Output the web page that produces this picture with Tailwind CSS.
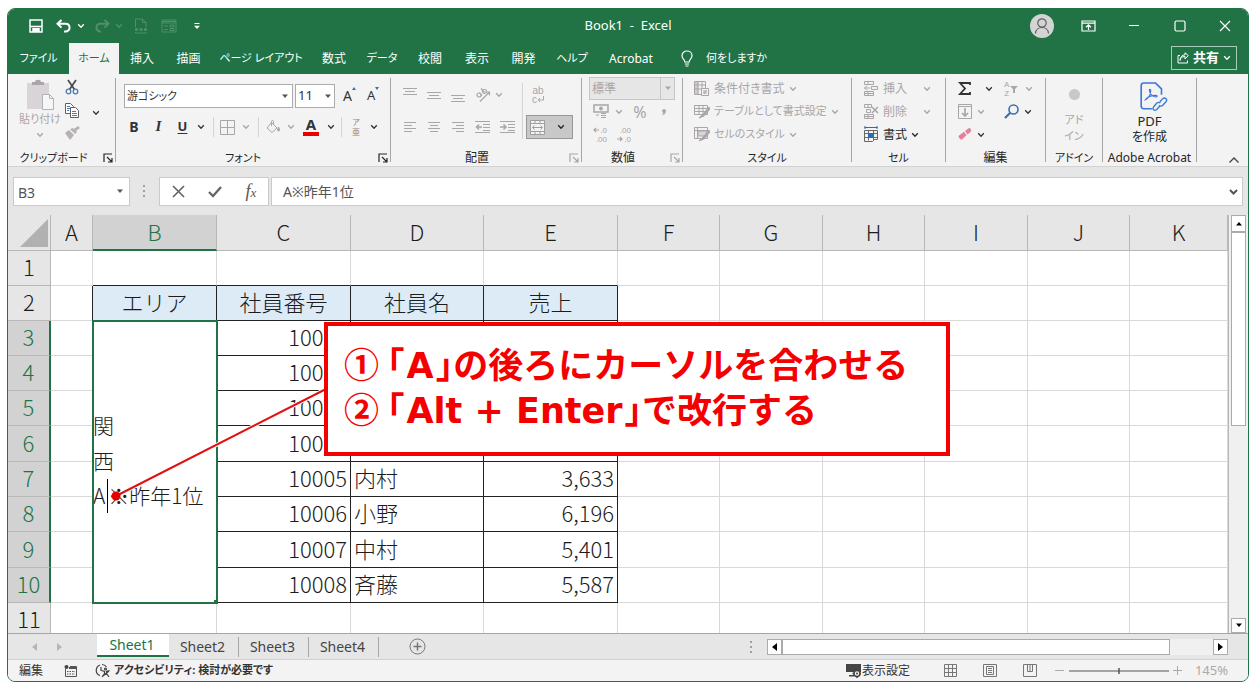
<!DOCTYPE html>
<html lang="ja">
<head>
<meta charset="utf-8">
<title>Book1 - Excel</title>
<script src="https://cdn.jsdelivr.net/npm/@tailwindcss/browser@4"></script>
</head>
<body class="bg-white">
<svg class="hidden" aria-hidden="true">
  <symbol id="chev" viewBox="0 0 8 6"><path d="M1.2 1.3 4 4.2 6.8 1.3" fill="none" stroke="currentColor" stroke-width="1.3"/></symbol>
  <symbol id="launch" viewBox="0 0 10 10"><path d="M1 9V1h8M4 4l5 5M9 5v4H5" fill="none" stroke="currentColor" stroke-width="1.2"/></symbol>
  <symbol id="tri" viewBox="0 0 8 5"><path d="M1 .5h6L4 4z" fill="currentColor"/></symbol>
</svg>
<div class="flex h-screen flex-col bg-white px-[7px] py-2 font-['Noto_Sans','Noto_Sans_CJK_JP',sans-serif] text-xs text-[#262626] [font-feature-settings:'palt']">
<div class="flex min-h-0 flex-1 flex-col overflow-hidden rounded-lg border border-[#217346] bg-[#e6e6e6]">

  <!-- Title bar -->
  <header class="grid h-[34px] shrink-0 grid-cols-[1fr_auto_1fr] items-center bg-[#217346] text-white">
    <div class="flex items-center pl-[21px]">
      <button aria-label="上書き保存" class="w-[14px]"><svg class="size-[14px]" viewBox="0 0 14 14" fill="none" stroke="currentColor" stroke-width="1.5"><path d="M1 1h12v12H1z"/><path d="M1 7.5h12"/><path d="M4 13V9.800h6V13" fill="currentColor"/></svg></button>
      <button aria-label="元に戻す" class="ml-[13px] w-4"><svg class="h-[14px] w-4" viewBox="0 0 16 14" fill="none" stroke="currentColor" stroke-width="2"><path d="M5.500 1 1.500 4.800l4 3.800M2 4.800h7.500c5.300 0 5.500 7.700 0 7.700H8"/></svg></button>
      <button aria-label="元に戻す一覧" class="ml-[3px] w-3"><svg class="mx-auto h-[6px] w-2"><use href="#chev"/></svg></button>
      <button aria-label="やり直し" class="ml-[7px] w-4 text-[#4d9069]"><svg class="h-[14px] w-4" viewBox="0 0 16 14" fill="none" stroke="currentColor" stroke-width="2"><path d="m10.500 1 4 3.800-4 3.800M14 4.800H6.500c-5.300 0-5.500 7.700 0 7.700H7"/></svg></button>
      <button aria-label="やり直し一覧" class="ml-[3px] w-3 text-[#4d9069]"><svg class="mx-auto h-[6px] w-2"><use href="#chev"/></svg></button>
      <button aria-label="ファイル" class="ml-[9px] w-[14px] text-[#4d9069]"><svg class="h-4 w-[14px]" viewBox="0 0 14 16" fill="none" stroke="currentColor"><path d="M1.500 9V1h7l3.500 3.500V9M8.500 1v3.500H12M1.500 14v1H12v-1"/><path d="M1 11.500h3M5.500 11.500h3M10 11.500h3" stroke-width="2.500"/></svg></button>
      <button aria-label="フォーム" class="ml-[13px] w-4 text-[#4d9069]"><svg class="h-[14px] w-4" viewBox="0 0 16 14" fill="none" stroke="currentColor"><path d="M1 1h14v12H1zM1 2.500h14M1 4h14M3 7h4M3 10.500h4M9 6h4v2H9zM9 9.500h4v2H9z"/></svg></button>
      <button aria-label="クイック アクセス ツール バーのカスタマイズ" class="ml-4 w-2"><svg class="h-2 w-2" viewBox="0 0 8 8"><path d="M1.500 1.500h5" stroke="currentColor"/><path d="M1 3.800h6L4 7z" fill="currentColor"/></svg></button>
    </div>
    <h1 class="whitespace-pre text-[13px]">Book1  -  Excel</h1>
    <div class="flex items-center justify-end pr-[17px]">
      <button aria-label="アカウント" class="size-6 rounded-full bg-[#d4d4d4] text-[#5f5f5f]"><svg class="size-6" viewBox="0 0 24 24" fill="none" stroke="currentColor" stroke-width="1.200"><circle cx="12" cy="9" r="4.200"/><path d="M5.500 19.500c.4-8 12.600-8 13 0"/></svg></button>
      <button aria-label="リボンの表示オプション" class="ml-[27px] w-[15px]"><svg class="h-3 w-[15px]" viewBox="0 0 15 12" fill="none" stroke="currentColor" stroke-width="1.200"><path d="M1 1h13v10H1zM1 3.200h13M7.500 10V5M5 7.200 7.500 4.800 10 7.200"/></svg></button>
      <button aria-label="最小化" class="ml-8 w-3"><svg class="h-3 w-3" viewBox="0 0 12 12"><path d="M1 5.500h10" stroke="currentColor" stroke-width="1.200"/></svg></button>
      <button aria-label="最大化" class="ml-[34px] w-3"><svg class="size-3" viewBox="0 0 12 12" fill="none" stroke="currentColor" stroke-width="1.200"><rect x="1" y="1" width="10" height="10" rx="1.500"/></svg></button>
      <button aria-label="閉じる" class="ml-[33px] w-3"><svg class="size-3" viewBox="0 0 12 12" stroke="currentColor" stroke-width="1.200"><path d="m1 1 10 10M11 1 1 11"/></svg></button>
    </div>
  </header>

  <!-- Ribbon tabs -->
  <nav class="flex h-[31px] shrink-0 items-stretch bg-[#217346] text-white">
    <button class="w-[61px] text-[11px]">ファイル</button>
    <button class="w-[50px] bg-[#f3f3f3] text-[11px] text-[#217346]">ホーム</button>
    <button class="w-[46px]">挿入</button>
    <button class="w-[47px]">描画</button>
    <button class="w-[98px] text-[11px]">ページ レイアウト</button>
    <button class="w-12">数式</button>
    <button class="w-12 text-[11px]">データ</button>
    <button class="w-12">校閲</button>
    <button class="w-[46px]">表示</button>
    <button class="w-[47px]">開発</button>
    <button class="w-[50px] text-[11px]">ヘルプ</button>
    <button class="w-[68px]">Acrobat</button>
    <button class="ml-4 flex items-center gap-[13px] text-[11px]"><svg class="h-[17px] w-3" viewBox="0 0 12 17" fill="none" stroke="currentColor" stroke-width="1.200"><path d="M3.800 12c0-2.500-2.800-3.200-2.800-6.200 0-6.400 10-6.400 10 0 0 3-2.800 3.700-2.800 6.200zM3.800 14h4.400M4.500 16h3"/></svg>何をしますか</button>
    <button class="mr-[11px] ml-auto mt-[3px] flex h-6 w-[66px] items-center justify-center gap-1 border border-[#a9cbb7] text-[13px] font-bold"><svg class="h-3 w-3" viewBox="0 0 12 12" fill="none" stroke="currentColor"><path d="M3 3.500H1V11h9.500V8.500M3 8.500c.5-3 2-4 5-4V7l3.300-3.500L8 .8v2C5 3 3.200 5 3 8.500z"/></svg>共有<svg class="h-[6px] w-2"><use href="#chev"/></svg></button>
  </nav>

  <!-- Ribbon -->
  <div class="flex h-[93px] shrink-0 items-start border-b border-[#d2d2d2] bg-[#f3f3f3] text-[#a9a5a9]">

    <section aria-label="クリップボード" class="w-[107px]">
      <div class="flex h-[72px] pt-[5px]">
        <button class="flex w-[55px] flex-col items-center pl-[9px] text-[11px]">
          <svg class="h-8 w-7" viewBox="0 0 28 32"><path d="M1 4h22v26H1z" fill="#d8d4d8"/><path d="M6 6V3h3c0-3 6-3 6 0h3v3z" fill="#a9a5a9"/><path d="M16.500 15.500h7l4 4v11h-11z" fill="#f6f6f6" stroke="#b5b1b5"/><path d="M23.500 15.500v4h4" fill="none" stroke="#b5b1b5"/></svg>
          <span class="leading-4 whitespace-nowrap">貼り付け</span>
          <svg class="mt-[5px] h-[6px] w-2"><use href="#chev"/></svg>
        </button>
        <div class="flex w-[18px] flex-col items-center gap-2">
          <button aria-label="切り取り"><svg class="h-4 w-[14px]" viewBox="0 0 14 16" fill="none"><path d="m3 1 6.500 9.500M11 1 4.500 10.500" stroke="#4a4a4a" stroke-width="1.700"/><circle cx="3.500" cy="12.500" r="2.300" stroke="#4a7ab8" stroke-width="1.300"/><circle cx="10.500" cy="12.500" r="2.300" stroke="#4a7ab8" stroke-width="1.300"/></svg></button>
          <button aria-label="コピー"><svg class="h-[15px] w-[14px]" viewBox="0 0 14 15" fill="#fff" stroke="#606060"><path d="M.5.5h5l3 3v7h-8z"/><path d="M5.500 4.500h5l3 3v7h-8z"/><path d="M2 3.500h3M2 5.500h3M2 7.500h2M7 8.500h4M7 10.500h5M7 12.500h5" stroke="#4a7ab8"/></svg></button>
          <button aria-label="書式のコピー"><svg class="h-[14px] w-4" viewBox="0 0 16 14" fill="#b5b1b5"><path d="m10 3 4-3 2 2-4 3zM6 3l3-1 4 4-2 2zM1 7l4-3 5 5-4 5z"/></svg></button>
        </div>
        <button aria-label="コピーのオプション" class="ml-2 w-[15px] text-[#333]"><svg class="ml-[3px] h-[6px] w-2"><use href="#chev"/></svg></button>
      </div>
      <div class="flex h-5 items-center pt-1 text-[#262626]"><h2 class="w-[91px] text-center text-[11px]">クリップボード</h2><button aria-label="クリップボードの設定" class="ml-1"><svg class="size-[10px]"><use href="#launch"/></svg></button></div>
    </section>
    <div class="mt-1 h-[84px] w-px bg-[#a6a6a6]"></div>

    <section aria-label="フォント" class="w-[274px]">
      <div class="flex h-[72px] flex-col pl-2 pt-[10px] text-[#333]">
        <div class="flex h-6 items-center">
          <div class="flex h-6 w-[169px] items-center border border-[#ababab] bg-white"><input aria-label="フォント名" value="游ゴシック" class="min-w-0 flex-1 pl-0.5 text-[11px] outline-none"><svg class="mr-[3px] h-[5px] w-2 text-[#555]"><use href="#tri"/></svg></div>
          <div class="ml-0.5 flex h-6 w-10 items-center border border-[#ababab] bg-white"><input aria-label="フォント サイズ" value="11" class="min-w-0 flex-1 pl-0.5 text-[13px] outline-none"><svg class="mr-[2px] h-[5px] w-2 text-[#555]"><use href="#tri"/></svg></div>
          <button aria-label="フォント サイズの拡大" class="ml-2 flex w-3 text-sm">A<svg class="h-1 w-1 shrink-0" viewBox="0 0 4 4"><path d="M0 4 2 1l2 3z" fill="#3a6fb0"/></svg></button>
          <button aria-label="フォント サイズの縮小" class="ml-3 flex w-3 text-[13px]">A<svg class="h-1 w-1 shrink-0" viewBox="0 0 4 4"><path d="M0 0 2 3l2-3z" fill="#3a6fb0"/></svg></button>
        </div>
        <div class="-ml-0.5 mt-1 flex h-[30px] items-center">
          <button class="w-6 text-sm font-bold">B</button>
          <button class="w-[25px] font-['Liberation_Serif'] text-[15px] font-bold italic">I</button>
          <button class="w-[23px] text-[13px] font-bold underline underline-offset-2">U</button>
          <button aria-label="下線の種類" class="w-[14px]"><svg class="mx-auto h-[6px] w-2"><use href="#chev"/></svg></button>
          <div class="mx-[5px] h-5 w-px bg-[#d4d4d4]"></div>
          <button aria-label="罫線" class="w-[17px] text-[#a9a5a9]"><svg class="mx-auto size-[15px]" viewBox="0 0 15 15" fill="none" stroke="currentColor"><path d="M.5.5h14v14H.5zM7.500.5v14M.5 7.500h14"/></svg></button>
          <button aria-label="罫線の種類" class="w-5 text-[#a9a5a9]"><svg class="mx-auto h-[6px] w-2"><use href="#chev"/></svg></button>
          <div class="mx-0.5 h-5 w-px bg-[#d4d4d4]"></div>
          <button aria-label="塗りつぶしの色" class="w-6 text-[#a9a5a9]"><svg class="mx-auto h-[14px] w-[14px]" viewBox="0 0 14 14" fill="none" stroke="currentColor"><path d="M5.500 2.500 11 8l-5 4.500L1 8zM5.500 6V1.500c0-1.300 2-1.300 2 0V4"/><path d="M12.500 7c1.500 2.500 1.300 4 0 4s-1-2 0-4z" fill="currentColor"/></svg></button>
          <button aria-label="塗りつぶしの種類" class="w-3 text-[#a9a5a9]"><svg class="mx-auto h-[6px] w-2"><use href="#chev"/></svg></button>
          <button aria-label="フォントの色" class="flex w-7 flex-col items-center"><span class="text-[15px] leading-3 font-bold">A</span><span class="mt-0.5 h-1 w-4 bg-[#e80000]"></span></button>
          <button aria-label="フォントの色一覧" class="w-[11px]"><svg class="mx-auto h-[6px] w-2"><use href="#chev"/></svg></button>
          <div class="mx-[5px] h-5 w-px bg-[#d4d4d4]"></div>
          <button aria-label="ふりがなの表示" class="flex w-[18px] flex-col items-center text-[8px] leading-[10px] text-[#8a868a]"><span>ア</span><span>亜</span></button>
          <button aria-label="ふりがなの種類" class="w-[18px]"><svg class="mx-auto h-[6px] w-2"><use href="#chev"/></svg></button>
        </div>
      </div>
      <div class="flex h-5 items-center pt-1 text-[#262626]"><h2 class="w-[254px] text-center text-[11px]">フォント</h2><button aria-label="フォントの設定" class="ml-2"><svg class="size-[10px]"><use href="#launch"/></svg></button></div>
    </section>
    <div class="mt-1 h-[84px] w-px bg-[#a6a6a6]"></div>

    <section aria-label="配置" class="w-[190px]">
      <div class="flex h-[72px] pl-[7px] pt-[5px]">
        <div class="flex w-[121px] flex-col">
          <div class="flex h-8 items-center">
            <button aria-label="上揃え" class="w-6"><svg class="mx-auto h-4 w-[14px]" viewBox="0 0 14 16" stroke="currentColor"><path d="M0 1.500h14M2 4.500h10M0 7.500h14"/></svg></button>
            <button aria-label="上下中央揃え" class="w-6"><svg class="mx-auto h-4 w-[14px]" viewBox="0 0 14 16" stroke="currentColor"><path d="M0 5.500h14M2 8.500h10M0 11.500h14"/></svg></button>
            <button aria-label="下揃え" class="w-6"><svg class="mx-auto h-4 w-[14px]" viewBox="0 0 14 16" stroke="currentColor"><path d="M0 8.500h14M2 11.500h10M0 14.500h14"/></svg></button>
            <button aria-label="方向" class="w-[25px]"><svg class="mx-auto h-4 w-4" viewBox="0 0 16 16" fill="none" stroke="currentColor" stroke-width="1.200"><circle cx="4" cy="8" r="2"/><path d="m4.500 5.500 2.500 3.500M6 1.500l3.500 4M5 14.500 14.500 5M11 5h3.500v3.500"/><circle cx="9.500" cy="4.500" r="2"/></svg></button>
            <button aria-label="方向の種類" class="w-2"><svg class="h-[6px] w-2"><use href="#chev"/></svg></button>
          </div>
          <div class="flex h-8 items-center">
            <button aria-label="左揃え" class="w-6"><svg class="mx-auto h-3 w-3" viewBox="0 0 12 12" stroke="currentColor"><path d="M0 1.500h12M0 4.500h8M0 7.500h12M0 10.500h8"/></svg></button>
            <button aria-label="中央揃え" class="w-6"><svg class="mx-auto h-3 w-3" viewBox="0 0 12 12" stroke="currentColor"><path d="M0 1.500h12M2 4.500h8M0 7.500h12M2 10.500h8"/></svg></button>
            <button aria-label="右揃え" class="w-6"><svg class="mx-auto h-3 w-3" viewBox="0 0 12 12" stroke="currentColor"><path d="M0 1.500h12M4 4.500h8M0 7.500h12M4 10.500h8"/></svg></button>
            <button aria-label="インデントを減らす" class="w-[25px]"><svg class="mx-auto h-3 w-[15px]" viewBox="0 0 15 12" fill="none" stroke="currentColor"><path d="M0 .5h15M8 3.500h7M8 6.500h7M8 9.500h7M0 11.500h15"/><path d="M7 6H1.500M4 3.500 1.500 6 4 8.500" stroke-width="1.500"/></svg></button>
            <button aria-label="インデントを増やす" class="w-6"><svg class="mx-auto h-3 w-[15px]" viewBox="0 0 15 12" fill="none" stroke="currentColor"><path d="M0 .5h15M8 3.500h7M8 6.500h7M8 9.500h7M0 11.500h15"/><path d="M0 6h5.500M3.500 3.500 6 6 3.500 8.500" stroke-width="1.500"/></svg></button>
          </div>
        </div>
        <div class="mx-[3px] mt-1 h-14 w-px bg-[#d4d4d4]"></div>
        <div class="flex w-[47px] flex-col">
          <button aria-label="折り返して全体を表示する" class="flex h-9 w-6 flex-col items-center justify-center pb-1 font-['Liberation_Sans'] text-[10px] leading-[9px]"><span>ab</span><span class="flex">c<svg class="h-2 w-[7px]" viewBox="0 0 7 8" fill="none" stroke="currentColor"><path d="M6.500 1v4H1M3 3 1 5l2 2"/></svg></span></button>
          <button aria-label="セルを結合して中央揃え" class="flex h-6 w-[47px] items-center gap-3 border border-[#979797] bg-[#c8c8c8] pl-[3px] text-[#222]"><svg class="size-[15px]" viewBox="0 0 15 15" fill="none" stroke="#a09ca0"><path d="M.5.5h14v14H.5z" fill="#f3f3f3"/><path d="M.5 3.500h14M.5 11.500h14M5 .5v3M10 .5v3M5 11.500v3M10 11.500v3M3 7.500h9M4.500 5.500l-2 2 2 2M10.500 5.500l2 2-2 2"/></svg><svg class="h-[6px] w-2"><use href="#chev"/></svg></button>
        </div>
      </div>
      <div class="flex h-5 items-center pt-1"><h2 class="w-[172px] text-center text-[#262626]">配置</h2><button aria-label="配置の設定" class="ml-1.5"><svg class="size-[10px]"><use href="#launch"/></svg></button></div>
    </section>
    <div class="mt-1 h-[84px] w-px bg-[#a6a6a6]"></div>

    <section aria-label="数値" class="w-[100px]">
      <div class="h-[72px] pl-[7px] pt-[3px]">
        <div class="flex h-[23px] w-[86px] items-center border border-[#c6c6c6] bg-[#e6e6e6]">
          <select aria-label="表示形式" class="h-full min-w-0 flex-1 appearance-none pl-0.5 text-xs outline-none"><option>標準</option></select>
          <div class="flex h-full w-[14px] items-center justify-center border-l border-[#c6c6c6]"><svg class="h-[5px] w-2"><use href="#tri"/></svg></div>
        </div>
        <div class="flex h-[23px] items-center">
          <button aria-label="通貨表示形式" class="w-6"><svg class="mx-auto h-[15px] w-4" viewBox="0 0 16 15" fill="none" stroke="currentColor"><path d="M1 1h14v7H1z" stroke-width="1.500"/><circle cx="8" cy="4.500" r="1.500" fill="currentColor"/><path d="M8 9.500h5M8 11.500h5M8 13.500h5M3 11h3"/></svg></button>
          <button aria-label="通貨の種類" class="w-3"><svg class="mx-auto h-[6px] w-2"><use href="#chev"/></svg></button>
          <button class="w-[30px] text-base">%</button>
          <button aria-label="桁区切りスタイル" class="w-[18px]"><svg class="mx-auto h-2 w-[6px]" viewBox="0 0 6 8"><path d="M5 2.500C5 5 3.500 7 1 7.500L2.500 5A2 2 0 1 1 5 2.500z" fill="currentColor"/></svg></button>
        </div>
        <div class="flex h-[23px] items-center font-['Liberation_Sans'] text-[8px] leading-[9px]">
          <button aria-label="小数点以下の表示桁数を増やす" class="flex w-6 flex-col items-end pr-1.5"><span class="flex items-center gap-px"><svg class="h-[6px] w-[6px]" viewBox="0 0 6 6" fill="none" stroke="currentColor" stroke-width="1.200"><path d="M6 3H1M3 1 1 3l2 2"/></svg>.0</span><span>.00</span></button>
          <button aria-label="小数点以下の表示桁数を減らす" class="flex w-6 flex-col items-end pr-1.5"><span>.00</span><span class="flex items-center gap-px"><svg class="h-[6px] w-[6px]" viewBox="0 0 6 6" fill="none" stroke="currentColor" stroke-width="1.200"><path d="M0 3h5M3 1l2 2-2 2"/></svg>.0</span></button>
        </div>
      </div>
      <div class="flex h-5 items-center pt-1"><h2 class="w-[82px] text-center text-[#262626]">数値</h2><button aria-label="数値の設定" class="ml-1.5"><svg class="size-[10px]"><use href="#launch"/></svg></button></div>
    </section>
    <div class="mt-1 h-[84px] w-px bg-[#a6a6a6]"></div>

    <section aria-label="スタイル" class="w-[168px]">
      <div class="flex h-[72px] flex-col items-start pl-[11px] pt-[3px]">
        <button class="flex h-[23px] items-center gap-1"><svg class="h-[15px] w-4" viewBox="0 0 16 15" fill="none" stroke="currentColor"><path d="M.5.5h11v13H.5zM4 .5v13M8 .5v13M.5 4h11M.5 8h11"/><path d="M1 1h3v12H1z" fill="currentColor" opacity=".5"/><path d="M7.500 7.500h7v7h-7z" fill="#f3f3f3"/><path d="M9 10h4M9 12h4M12 9l-2 4"/></svg>条件付き書式<svg class="h-[6px] w-2"><use href="#chev"/></svg></button>
        <button class="flex h-[23px] items-center gap-1 text-[11px]"><svg class="h-[15px] w-4" viewBox="0 0 16 15" fill="none" stroke="currentColor"><path d="M.5 1.500h13v9H.5zM.5 4.500h13M.5 7.500h13M5 1.500v9M9 1.500v9"/><path d="m15 3-6 7-4 4 5-2 6-7z" fill="currentColor"/></svg>テーブルとして書式設定<svg class="h-[6px] w-2"><use href="#chev"/></svg></button>
        <button class="flex h-[23px] items-center gap-1 text-[11px]"><svg class="h-[15px] w-4" viewBox="0 0 16 15" fill="none" stroke="currentColor"><path d="M.5.5h13v11H.5zM.5 3.500h13M3.500.5v11"/><path d="M4 4h9v5H4z" fill="#d8d4d8"/><path d="m15 3-6 7-4 4 5-2 6-7z" fill="currentColor"/></svg>セルのスタイル<svg class="h-[6px] w-2"><use href="#chev"/></svg></button>
      </div>
      <h2 class="h-5 pt-1 text-center text-[11px] leading-4 text-[#262626]">スタイル</h2>
    </section>
    <div class="mt-1 h-[84px] w-px bg-[#a6a6a6]"></div>

    <section aria-label="セル" class="w-[93px]">
      <div class="flex h-[72px] flex-col items-start pl-[11px] pt-[3px]">
        <button class="flex h-[23px] items-center"><svg class="mr-1 h-[15px] w-4" viewBox="0 0 16 15" fill="none" stroke="currentColor"><path d="M1.500.5h9v3h-9zM5 .5v3M1.500 10.500h9v4h-9zM5 10.500v4M1.500 12.500h9M8.500 5.500h6v3h-6zM7 7H1.500M4 4.500 1.500 7 4 9.500"/></svg>挿入<svg class="ml-4 h-[6px] w-2"><use href="#chev"/></svg></button>
        <button class="flex h-[23px] items-center"><svg class="mr-1 h-[15px] w-4" viewBox="0 0 16 15" fill="none" stroke="currentColor"><path d="M1.500.5h7v3h-7zM5 .5v3M1.500 10.500h9v4h-9zM5 10.500v4M1.500 12.500h9M3.500 5.500h4v3h-4z"/><path d="m9 3 6 6M15 3 9 9" stroke-width="1.500"/></svg>削除<svg class="ml-4 h-[6px] w-2"><use href="#chev"/></svg></button>
        <button class="flex h-[23px] items-center text-[#262626]"><svg class="mr-1 h-[17px] w-4" viewBox="0 0 16 17" fill="none" stroke="#666"><path d="M1.500 4.500h13v9h-3l-2 2h-8zM5.500 4.500v10M10.500 4.500v10M1.500 7.500h13M1.500 11.500h13"/><path d="M5.500 7.500h5v4h-5z" fill="#2b6cb8" stroke="#2b6cb8"/><path d="M1.500 1.500h13M2 0v3M14 0v3" stroke="#2b6cb8"/></svg>書式<svg class="ml-1 h-[6px] w-2"><use href="#chev"/></svg></button>
      </div>
      <h2 class="h-5 pt-1 text-center text-[11px] leading-4 text-[#262626]">セル</h2>
    </section>
    <div class="mt-1 h-[84px] w-px bg-[#a6a6a6]"></div>

    <section aria-label="編集" class="w-[99px]">
      <div class="flex h-[72px] pl-[11px] pt-[3px]">
        <div class="w-[47px]">
          <button aria-label="オート SUM" class="flex h-[23px] items-center gap-3 text-[#333]"><svg class="h-[15px] w-4" viewBox="0 0 16 15" fill="none" stroke="currentColor" stroke-width="1.800"><path d="M13 4V2H3l5 5.500L3 13h10v-2"/></svg><svg class="h-[6px] w-2"><use href="#chev"/></svg></button>
          <button aria-label="フィル" class="flex h-[23px] items-center gap-1"><svg class="h-[15px] w-4" viewBox="0 0 16 15" fill="none" stroke="currentColor"><path d="M1.500.5h13v14h-13zM1.500 2.500h13"/><path d="M8 4v8M5 9l3 3 3-3" stroke-width="1.700"/></svg><svg class="h-[6px] w-2"><use href="#chev"/></svg></button>
          <button aria-label="クリア" class="flex h-[23px] items-center gap-1 text-[#333]"><svg class="h-[15px] w-4" viewBox="0 0 16 15"><path d="m8 4 4-3c1-.6 3 2.400 2 3.400L10.500 7.500zM7 4.800 9.500 8.300 5 12.500c-1 .8-4.400-2.500-3.300-3.700z" fill="#e5809a"/></svg><svg class="h-[6px] w-2"><use href="#chev"/></svg></button>
        </div>
        <div>
          <button aria-label="並べ替えとフィルター" class="flex h-[23px] items-center"><span class="flex flex-col font-['Liberation_Sans'] text-[8px] leading-[9px]"><span>A</span><span>Z</span></span><svg class="ml-px mr-[7px] h-2 w-2" viewBox="0 0 8 8"><path d="M0 1h8L5 4v4H3V4z" fill="currentColor"/></svg><svg class="h-[6px] w-2"><use href="#chev"/></svg></button>
          <button aria-label="検索と選択" class="flex h-[23px] items-center gap-1 text-[#333]"><svg class="h-[15px] w-4" viewBox="0 0 16 15" fill="none" stroke="#3a6fb0"><circle cx="9.500" cy="5.500" r="4.500" stroke-width="1.600"/><path d="m6 9-5 5" stroke-width="2.200"/></svg><svg class="h-[6px] w-2"><use href="#chev"/></svg></button>
        </div>
      </div>
      <h2 class="h-5 pt-1 text-center text-[#262626]">編集</h2>
    </section>
    <div class="mt-1 h-[84px] w-px bg-[#a6a6a6]"></div>

    <section aria-label="アドイン" class="w-14 text-[11px]">
      <div class="flex h-[72px] justify-center pt-[15px]"><button class="flex flex-col items-center leading-4"><span class="mb-3 size-[11px] rounded-full bg-[#c8c8c8]"></span>アド<br>イン</button></div>
      <h2 class="h-5 pt-1 text-center leading-4 text-[#262626]">アドイン</h2>
    </section>
    <div class="mt-1 h-[84px] w-px bg-[#a6a6a6]"></div>

    <section aria-label="Adobe Acrobat" class="w-[93px] text-[#262626]">
      <div class="flex h-[72px] justify-center pt-2"><button class="flex flex-col items-center leading-4"><svg class="ml-2 h-[31px] w-[28px]" viewBox="0 0 26 29" fill="none" stroke="#3b78d8" stroke-width="1.500"><path d="M11 25H3.500C2 25 1 24 1 22.500v-19C1 2 2 1 3.500 1h11L20 6.500V12"/><path d="M5 16.500c3-1 5-5 5-8.500 0-1.500-1.700-1.500-1.300 0 .5 3.500 3.300 6 6.300 6 1.500 0 1.300-1.500-.5-1.500-4 0-7.500 1.500-9.500 4z" stroke-width="1"/><path d="m18.500 18.500 2.500-2.700c2.200-2 5 .3 3.200 2.700l-3 3.300c-1.200 1.300-2.700.8-3.400 0M18.500 22.500l-3 3.200c-2 2-4.500-.3-2.800-2.500l3-3.500c1-1 2.500-.8 3.200 0" stroke-width="1.300"/></svg><span class="text-[13px]">PDF</span><span>を作成</span></button></div>
      <h2 class="h-5 pt-1 text-center">Adobe Acrobat</h2>
    </section>
    <div class="mt-1 h-[84px] w-px bg-[#a6a6a6]"></div>
    <button aria-label="リボンを折りたたむ" class="mr-2 ml-auto self-end pb-0.5 text-[#444]"><svg class="h-2 w-3" viewBox="0 0 12 8" fill="none" stroke="currentColor" stroke-width="1.300"><path d="m1.500 6.500 4.500-4.500 4.500 4.500"/></svg></button>
  </div>

  <!-- Formula bar -->
  <div class="flex h-12 shrink-0 items-start px-[5px] pt-2.5 text-[#555]">
    <div class="flex h-[29px] w-[117px] items-center border border-[#cacaca] bg-white"><input aria-label="名前ボックス" value="B3" class="min-w-0 flex-1 pl-1 pt-0.5 text-sm outline-none"><svg class="mr-[5px] h-[5px] w-2"><use href="#tri"/></svg></div>
    <svg class="mx-[13px] mt-[7px] h-[14px] w-[3px]" viewBox="0 0 3 14" fill="#a0a0a0"><path d="M0 1h2v2H0zM0 6h2v2H0zM0 11h2v2H0z"/></svg>
    <div class="flex h-[29px] w-[110px] items-center justify-around border border-[#cacaca] bg-white">
      <button aria-label="キャンセル"><svg class="size-[13px]" viewBox="0 0 13 13" stroke="#666" stroke-width="1.700"><path d="m1 1 11 11M12 1 1 12"/></svg></button>
      <button aria-label="入力"><svg class="h-[13px] w-[14px]" viewBox="0 0 14 13" fill="none" stroke="#666" stroke-width="2.300"><path d="m1 7 4 4 8-9"/></svg></button>
      <button aria-label="関数の挿入" class="font-['Liberation_Serif'] text-lg leading-5 italic">f<span class="text-[13px]">x</span></button>
    </div>
    <div class="ml-0.5 flex h-[29px] min-w-0 flex-1 items-center border border-[#cacaca] bg-white"><input aria-label="数式バー" value="A※昨年1位" class="min-w-0 flex-1 pl-[11px] text-sm outline-none [font-feature-settings:normal]"><svg class="mr-1 h-[6px] w-[9px]" viewBox="0 0 9 6" fill="none" stroke="#555" stroke-width="2"><path d="m1 1 3.500 3.500L8 1"/></svg></div>
  </div>

  <!-- Worksheet -->
  <div class="relative flex min-h-0 flex-1 border-b border-[#a6a6a6]">
    <div class="min-w-0 flex-1 overflow-hidden bg-white font-['Noto_Sans_CJK_JP',sans-serif] font-light [font-feature-settings:normal]">
      <table class="w-full table-fixed border-separate border-spacing-0 text-[22px] leading-[30px] text-[#1c1c1c] [&_td]:border-r [&_td]:border-b [&_td]:border-[#d9d9d9] [&_td]:p-0 [&_td]:pb-1 [&_th]:border-r [&_th]:border-b [&_th]:border-[#b8b8b8] [&_th]:bg-[#e6e6e6] [&_th]:p-0 [&_th]:pb-1 [&_th]:font-light">
        <colgroup><col class="w-[43px]"><col class="w-[42px]"><col class="w-[124px]"><col class="w-[134px]"><col class="w-[133px]"><col class="w-[134px]"><col class="w-[102px]"><col class="w-[103px]"><col class="w-[102px]"><col class="w-[103px]"><col class="w-[102px]"><col></colgroup>
        <thead>
          <tr class="h-9">
            <th class="pb-0!"><button aria-label="すべて選択" class="ml-3 block"><svg class="size-7" viewBox="0 0 28 28"><path d="M28 0v28H0z" fill="#b1b1b1"/></svg></button></th>
            <th>A</th><th class="border-b-2! border-b-[#217346]! bg-[#d2d2d2]! pb-[3px]! text-[#217346]">B</th><th>C</th><th>D</th><th>E</th><th>F</th><th>G</th><th>H</th><th>I</th><th>J</th><th>K</th>
          </tr>
        </thead>
        <tbody>
          <tr class="h-[35px]"><th>1</th><td></td><td class="border-b-[#222]!"></td><td class="border-b-[#222]!"></td><td class="border-b-[#222]!"></td><td class="border-b-[#222]!"></td><td></td><td></td><td></td><td></td><td></td><td></td></tr>
          <tr class="h-[35px] text-center"><th>2</th><td class="border-r-[#222]!"></td><td class="border-[#222]! bg-[#ddebf7]">エリア</td><td class="border-[#222]! bg-[#ddebf7]">社員番号</td><td class="border-[#222]! bg-[#ddebf7]">社員名</td><td class="border-[#222]! bg-[#ddebf7]">売上</td><td></td><td></td><td></td><td></td><td></td><td></td></tr>
          <tr class="h-[35px]"><th class="border-r-2! border-r-[#217346]! bg-[#d2d2d2]! text-[#217346]">3</th><td></td>
            <td rowspan="8" class="relative z-10 bg-white pb-0.5! align-middle text-[21px] leading-[35px] outline-2 outline-offset-[-1px] outline-[#217346]">関<br>西<br>A<span class="relative"><span class="absolute top-[-1px] left-0.5 h-[34px] w-px bg-black"></span></span><span class="pl-[3px]">※昨年1位</span><span class="absolute right-[-2px] bottom-[-2px] size-1 bg-[#217346]"></span></td>
            <td class="border-[#222]! pr-[3px]! text-right">10001</td><td class="border-[#222]!"></td><td class="border-[#222]!"></td><td></td><td></td><td></td><td></td><td></td><td></td></tr>
          <tr class="h-[35px]"><th class="border-r-2! border-r-[#217346]! bg-[#d2d2d2]! text-[#217346]">4</th><td></td><td class="border-[#222]! pr-[3px]! text-right">10002</td><td class="border-[#222]!"></td><td class="border-[#222]!"></td><td></td><td></td><td></td><td></td><td></td><td></td></tr>
          <tr class="h-[35px]"><th class="border-r-2! border-r-[#217346]! bg-[#d2d2d2]! text-[#217346]">5</th><td></td><td class="border-[#222]! pr-[3px]! text-right">10003</td><td class="border-[#222]!"></td><td class="border-[#222]!"></td><td></td><td></td><td></td><td></td><td></td><td></td></tr>
          <tr class="h-9"><th class="border-r-2! border-r-[#217346]! bg-[#d2d2d2]! text-[#217346]">6</th><td></td><td class="border-[#222]! pr-[3px]! text-right">10004</td><td class="border-[#222]!"></td><td class="border-[#222]!"></td><td></td><td></td><td></td><td></td><td></td><td></td></tr>
          <tr class="h-[35px]"><th class="border-r-2! border-r-[#217346]! bg-[#d2d2d2]! text-[#217346]">7</th><td></td><td class="border-[#222]! pr-[3px]! text-right">10005</td><td class="border-[#222]! pl-[3px]!">内村</td><td class="border-[#222]! pr-[3px]! text-right">3,633</td><td></td><td></td><td></td><td></td><td></td><td></td></tr>
          <tr class="h-[35px]"><th class="border-r-2! border-r-[#217346]! bg-[#d2d2d2]! text-[#217346]">8</th><td></td><td class="border-[#222]! pr-[3px]! text-right">10006</td><td class="border-[#222]! pl-[3px]!">小野</td><td class="border-[#222]! pr-[3px]! text-right">6,196</td><td></td><td></td><td></td><td></td><td></td><td></td></tr>
          <tr class="h-9"><th class="border-r-2! border-r-[#217346]! bg-[#d2d2d2]! text-[#217346]">9</th><td></td><td class="border-[#222]! pr-[3px]! text-right">10007</td><td class="border-[#222]! pl-[3px]!">中村</td><td class="border-[#222]! pr-[3px]! text-right">5,401</td><td></td><td></td><td></td><td></td><td></td><td></td></tr>
          <tr class="h-[35px]"><th class="border-r-2! border-r-[#217346]! bg-[#d2d2d2]! text-[#217346]">10</th><td></td><td class="border-[#222]! pr-[3px]! text-right">10008</td><td class="border-[#222]! pl-[3px]!">斉藤</td><td class="border-[#222]! pr-[3px]! text-right">5,587</td><td></td><td></td><td></td><td></td><td></td><td></td></tr>
          <tr class="h-[30px]"><th class="border-b-0! pb-0!">11</th><td class="border-b-0!"></td><td class="border-b-0!"></td><td class="border-b-0!"></td><td class="border-b-0!"></td><td class="border-b-0!"></td><td class="border-b-0!"></td><td class="border-b-0!"></td><td class="border-b-0!"></td><td class="border-b-0!"></td><td class="border-b-0!"></td><td class="border-b-0!"></td></tr>
        </tbody>
      </table>
    </div>
    <!-- Vertical scroll bar -->
    <div class="flex w-5 flex-col items-center border-l border-[#b8b8b8] bg-[#f0f0f0]">
      <button aria-label="上へスクロール" class="flex h-[17px] w-[15px] shrink-0 items-center justify-center border border-[#ababab] bg-white text-black"><svg class="h-[5px] w-2 rotate-180"><use href="#tri"/></svg></button>
      <div class="h-[194px] w-[15px] border border-[#ababab] bg-white"></div>
      <button aria-label="下へスクロール" class="mt-auto flex h-[15px] w-[15px] shrink-0 items-center justify-center border border-[#ababab] bg-white text-black"><svg class="h-[5px] w-2"><use href="#tri"/></svg></button>
    </div>
    <!-- Callout with leader line -->
    <svg class="absolute top-[165px] left-[100px] z-20 h-[125px] w-[220px]" viewBox="0 0 220 125" fill="none"><path d="M8 116 218 9" stroke="#fff" stroke-width="4"/><path d="M8 116 218 9" stroke="#e01010" stroke-width="2"/><circle cx="8" cy="116" r="4.500" fill="#e80000"/></svg>
    <div class="absolute top-[107px] left-[316px] z-20 h-[134px] w-[626px] border-4 border-[#f50000] bg-white pt-[14px] pl-4 text-[35px] leading-[45px] font-bold whitespace-nowrap text-[#f50000] font-['Noto_Sans_CJK_JP',sans-serif] [font-feature-settings:'halt']">
      <p class="h-[45px]">①<span class="pl-2">「</span><span class="px-0.5 font-['DejaVu_Sans']">A</span>」の後ろにカーソルを合わせる</p>
      <p class="h-[45px]">②<span class="pl-2">「</span><span class="px-0.5 font-['DejaVu_Sans']">Alt + Enter</span>」で改行する</p>
    </div>
  </div>

  <!-- Sheet tabs and horizontal scroll bar -->
  <div class="flex h-[26px] shrink-0 items-center border-b border-[#d0d0d0] text-sm text-[#444]">
    <button aria-label="前のシート" class="ml-6 text-[#b5b5b5]"><svg class="h-2 w-[5px]" viewBox="0 0 5 8"><path d="M5 0v8L0 4z" fill="currentColor"/></svg></button>
    <button aria-label="次のシート" class="ml-5 text-[#b5b5b5]"><svg class="h-2 w-[5px]" viewBox="0 0 5 8"><path d="M0 0v8l5-4z" fill="currentColor"/></svg></button>
    <button class="ml-[35px] h-[23px] w-[72px] self-start border-b-2 border-[#217346] bg-white pt-px pr-0.5 text-[#217346]">Sheet1</button>
    <button class="h-5 w-[70px] border-r border-[#a6a6a6] pr-0.5 leading-5">Sheet2</button>
    <button class="h-5 w-[70px] border-r border-[#a6a6a6] pr-0.5 leading-5">Sheet3</button>
    <button class="h-5 w-[70px] border-r border-[#a6a6a6] pr-0.5 leading-5">Sheet4</button>
    <button aria-label="新しいシート" class="ml-[30px]"><svg class="size-[17px]" viewBox="0 0 17 17" fill="none" stroke="#777"><circle cx="8.500" cy="8.500" r="7.500"/><path d="M8.500 4.500v8M4.500 8.500h8" stroke-width="1.500"/></svg></button>
    <svg class="mr-[14px] ml-auto h-3 w-[3px]" viewBox="0 0 3 12" fill="#a0a0a0"><path d="M0 0h2v2H0zM0 5h2v2H0zM0 10h2v2H0z"/></svg>
    <div class="mr-5 flex h-4 w-[461px] bg-[#f0f0f0]">
      <button aria-label="左へスクロール" class="flex w-[15px] items-center justify-center border border-[#ababab] bg-white"><svg class="h-2 w-[5px]" viewBox="0 0 5 8"><path d="M5 0v8L0 4z"/></svg></button>
      <div class="w-[388px] border border-[#ababab] bg-white"></div>
      <button aria-label="右へスクロール" class="ml-auto flex w-[15px] items-center justify-center border border-[#ababab] bg-white"><svg class="h-2 w-[5px]" viewBox="0 0 5 8"><path d="M0 0v8l5-4z"/></svg></button>
    </div>
  </div>

  <!-- Status bar -->
  <footer class="flex h-[21px] shrink-0 items-center bg-[#f3f3f3] text-[#333]">
    <span class="ml-[11px]">編集</span>
    <button aria-label="マクロの記録" class="ml-[21px]"><svg class="h-3 w-[13px]" viewBox="0 0 13 12" fill="none" stroke="#555"><path d="M1.500 4v7.500h11V1.500H6"/><circle cx="2.500" cy="2" r="2" fill="#444" stroke="none"/><path d="M5 3h7" stroke-width="2"/><path d="M3 6.500h8M3 9h8" stroke-dasharray="1.500 1"/></svg></button>
    <button class="ml-[18px] flex items-center gap-[3px] text-[11px] font-bold"><svg class="h-[15px] w-4" viewBox="0 0 16 15" fill="none" stroke="#444" stroke-width="1.200"><path d="M5 2C0 4 0 11 5 12.500M7 1.500c2 0 3.500 1 4.500 2.500M6 4v4"/><circle cx="10.500" cy="6" r="1"/><path d="m6.500 7.500 3 1v2L7 14M14.500 7.500l-3 1v2L14 14M8 13l6-5"/></svg>アクセシビリティ: 検討が必要です</button>
    <button class="mr-[34px] ml-auto flex items-center gap-px"><svg class="h-[14px] w-[15px]" viewBox="0 0 15 14"><path d="M0 0h15v8H0zM3 11h5v1.500H3z" fill="#444"/><circle cx="11" cy="9.500" r="3" fill="#f3f3f3" stroke="#444" stroke-width="1.500"/><circle cx="11" cy="9.500" r="1" fill="#444"/><path d="M11 5v2M11 12v2M6.500 9.500h2M13.500 9.500h1.500" stroke="#444" stroke-width="1.500"/></svg>表示設定</button>
    <button aria-label="標準" class="mr-[26px]"><svg class="size-[13px]" viewBox="0 0 13 13" fill="none" stroke="#777"><path d="M.5.5h12v12H.5zM4.500.5v12M8.500.5v12M.5 4.500h12M.5 8.500h12"/></svg></button>
    <button aria-label="ページ レイアウト" class="mr-[26px]"><svg class="h-[13px] w-[14px]" viewBox="0 0 14 13" fill="none" stroke="#777"><path d="M.5.5h13v12H.5zM3.500 2.500h7v8h-7zM5 4.500h4M5 6.500h4M5 8.500h4"/></svg></button>
    <button aria-label="改ページ プレビュー"><svg class="h-[13px] w-[14px]" viewBox="0 0 14 13" fill="none" stroke="#777"><path d="M.5.5h13v12H.5zM4.500.5v7h5v-7M7 .5v7"/></svg></button>
    <button aria-label="縮小" class="ml-[18px] text-[#aaa]"><svg class="size-[9px]" viewBox="0 0 9 9"><path d="M0 4.500h9" stroke="currentColor"/></svg></button>
    <div class="relative ml-[5px] h-3 w-[100px]">
      <svg class="h-3 w-[100px]" viewBox="0 0 100 12"><path d="M0 6h100" stroke="#555" stroke-width="1.200"/><path d="M50 3v6" stroke="#555" stroke-width="1.500"/></svg>
      <input type="range" aria-label="ズーム" class="absolute inset-0 w-full opacity-0">
    </div>
    <button aria-label="拡大" class="ml-1 text-[#aaa]"><svg class="size-[9px]" viewBox="0 0 9 9"><path d="M0 4.500h9M4.500 0v9" stroke="currentColor"/></svg></button>
    <button class="mr-5 w-[46px] text-right text-[13px] text-[#aaa]">145%</button>
  </footer>
</div>
</div>
</body>
</html>
